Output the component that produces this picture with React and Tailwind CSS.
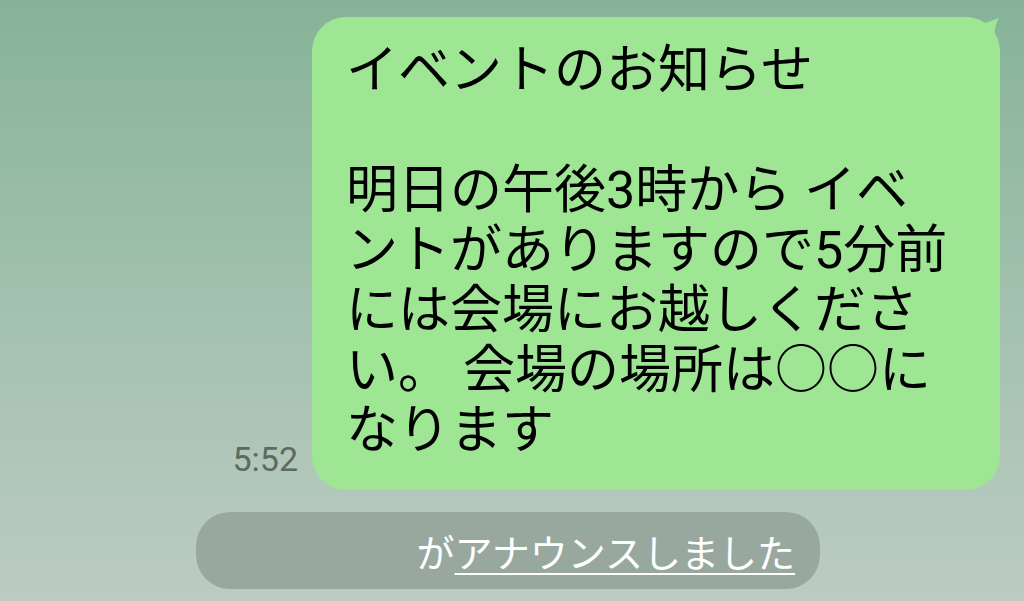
export default function App() {
  const lines = [
    "イベントのお知らせ",
    "\u00a0",
    "明日の午後3時から イベ",
    "ントがありますので5分前",
    "には会場にお越しくださ",
    "い。 会場の場所は○○に",
    "なります",
  ];
  return (
    <div
      className="relative w-full h-[601px] overflow-hidden bg-gradient-to-b from-[#86b398] via-[#a2c1ae] to-[#bccbc3]"
      style={{ fontFamily: 'Roboto, "Noto Sans CJK JP", sans-serif' }}
    >
      <div className="flex flex-col pt-[17px]">
        <div className="flex justify-end items-end pr-[24px] gap-[14px]">
          <div className="mb-[12px] text-[34px] leading-[38px] text-[#5b6a62]" style={{ fontFamily: 'Roboto, sans-serif' }}>
            5:52
          </div>
          <div className="relative w-[688px] h-[473px] rounded-[34px] bg-[#9ee694] pl-[34px] pt-[24px]">
            <svg
              className="absolute right-[-1px] top-[-2px]"
              width="52"
              height="60"
              viewBox="0 0 52 60"
            >
              <path
                d="M0 2 L15 2 C24 2 28 6 31 10 L50 3 C45 12 45 20 47 26 C49 30 51 34 51 40 L51 60 L0 60 Z"
                fill="#9ee694"
              />
            </svg>
            <div className="relative text-[52px] leading-[60px] text-black whitespace-pre">
              {lines.map((l, i) => (
                <div key={i}>{l}</div>
              ))}
            </div>
          </div>
        </div>
        <div className="flex pl-[196px] mt-[22px]">
          <div className="w-[624px] h-[77px] rounded-[34px] bg-[#98a89f] flex items-center justify-end pr-[25px]">
            <span className="text-[38px] leading-[44px] text-white" style={{ fontFamily: '"Noto Sans CJK JP", sans-serif' }}>
              が<span className="underline decoration-2 underline-offset-[6px]">アナウンスしました</span>
            </span>
          </div>
        </div>
      </div>
    </div>
  );
}
